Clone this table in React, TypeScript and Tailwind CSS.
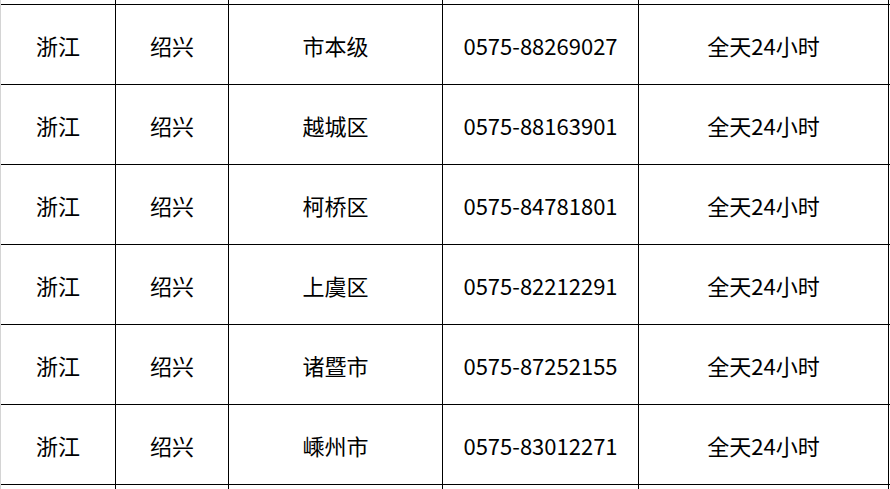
import React from "react";

const rows = [
  ["", "", "", "", ""],
  ["浙江", "绍兴", "市本级", "0575-88269027", "全天24小时"],
  ["浙江", "绍兴", "越城区", "0575-88163901", "全天24小时"],
  ["浙江", "绍兴", "柯桥区", "0575-84781801", "全天24小时"],
  ["浙江", "绍兴", "上虞区", "0575-82212291", "全天24小时"],
  ["浙江", "绍兴", "诸暨市", "0575-87252155", "全天24小时"],
  ["浙江", "绍兴", "嵊州市", "0575-83012271", "全天24小时"],
  ["", "", "", "", ""],
];

const widths = ["w-[115px]", "w-[113px]", "w-[214px]", "w-[196px]", "w-[250px]"];

export default function App() {
  return (
    <div className="w-[890px] h-[489px] overflow-hidden bg-white">
      <div className="h-full border-l border-[#d4d4d4] overflow-hidden">
        <div className="-mt-[75px] flex flex-col">
          {rows.map((r, i) => (
            <div key={i} className="flex h-[80px] border-b border-black">
              {r.map((c, j) => (
                <div
                  key={j}
                  className={`${widths[j]} shrink-0 border-r border-black flex items-center justify-center pt-[2px] text-[22px] text-black`}
                  style={{ fontFamily: '"Noto Sans CJK SC", "Noto Sans", sans-serif' }}
                >
                  {c}
                </div>
              ))}
            </div>
          ))}
        </div>
      </div>
    </div>
  );
}
